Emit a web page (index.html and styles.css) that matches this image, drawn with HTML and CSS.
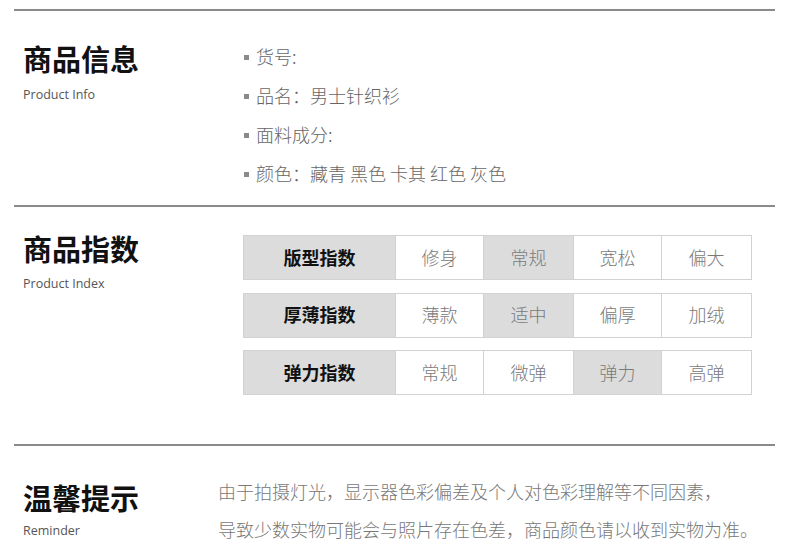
FILE: index.html
```html
<!DOCTYPE html>
<html lang="zh-CN">
<head>
<meta charset="utf-8">
<title>商品信息</title>
<link rel="stylesheet" href="styles.css">
</head>
<body>
<div class="page">
  <section class="sec sec-info">
    <div class="head">
      <h2 class="title">商品信息</h2>
      <p class="sub">Product Info</p>
    </div>
    <ul class="info-list">
      <li>货号:</li>
      <li>品名：男士针织衫</li>
      <li>面料成分:</li>
      <li>颜色：藏青 黑色 卡其 红色 灰色</li>
    </ul>
  </section>

  <section class="sec sec-index">
    <div class="head">
      <h2 class="title">商品指数</h2>
      <p class="sub">Product Index</p>
    </div>
    <div class="index-table">
      <div class="irow">
        <div class="cell label">版型指数</div>
        <div class="cell">修身</div>
        <div class="cell on">常规</div>
        <div class="cell">宽松</div>
        <div class="cell">偏大</div>
      </div>
      <div class="irow">
        <div class="cell label">厚薄指数</div>
        <div class="cell">薄款</div>
        <div class="cell on">适中</div>
        <div class="cell">偏厚</div>
        <div class="cell">加绒</div>
      </div>
      <div class="irow">
        <div class="cell label">弹力指数</div>
        <div class="cell">常规</div>
        <div class="cell">微弹</div>
        <div class="cell on">弹力</div>
        <div class="cell">高弹</div>
      </div>
    </div>
  </section>

  <section class="sec sec-tip">
    <div class="head">
      <h2 class="title">温馨提示</h2>
      <p class="sub">Reminder</p>
    </div>
    <div class="tip-text">
      <p>由于拍摄灯光，显示器色彩偏差及个人对色彩理解等不同因素，</p>
      <p>导致少数实物可能会与照片存在色差，商品颜色请以收到实物为准。</p>
    </div>
  </section>
</div>
</body>
</html>
```
FILE: styles.css
```css
* { box-sizing: border-box; }
html, body { margin: 0; padding: 0; background: #fff; }
body {
  font-family: "Noto Sans CJK SC", "Noto Sans", sans-serif;
  color: #666;
}
.page {
  width: 790px;
  padding: 9px 15px 0 14px;
}
.sec {
  border-top: 2px solid #8a8a8a;
  display: grid;
}
.head { padding-left: 9px; }
.title {
  margin: 0;
  font-size: 29px;
  line-height: 30px;
  font-weight: 700;
  color: #111;
}
.sub {
  margin: 14px 0 0;
  font-family: "Open Sans", "Noto Sans", sans-serif;
  font-size: 12.5px;
  line-height: 16px;
  color: #555;
}

/* section 1 */
.sec-info {
  grid-template-columns: 229px 1fr;
  padding: 26px 0 12px;
}
.sec-info .head { padding-top: 6px; }
.info-list {
  list-style: none;
  margin: 0;
  padding: 0;
}
.info-list li {
  font-size: 18px;
  line-height: 39px;
  color: #666;
  display: flex;
  align-items: center;
  font-weight: 300;
}
.info-list li::before {
  content: "";
  width: 5px;
  height: 5px;
  background: #8a8a8a;
  margin: 1px 7px 0 1px;
}

/* section 2 */
.sec-index {
  grid-template-columns: 229px 1fr;
  padding: 26px 0 49px;
}
.sec-index .head { padding-top: 0; }
.sec-index .sub { margin-top: 13px; }
.index-table {
  width: 509px;
  margin-top: 2px;
  display: flex;
  flex-direction: column;
  gap: 12.5px;
}
.irow {
  display: grid;
  grid-template-columns: 151px 88px 90px 88px 1fr;
  height: 45px;
  border: 1px solid #d2d2d2;
}
.cell {
  display: flex;
  align-items: center;
  justify-content: center;
  padding-bottom: 2px;
  font-size: 18px;
  color: #7a7a7a;
  font-weight: 300;
  border-left: 1px solid #d2d2d2;
}
.cell.label {
  border-left: none;
  background: #dcdcdc;
  color: #111;
  font-weight: 700;
}
.cell.on { background: #dcdcdc; }

/* section 3 */
.sec-tip {
  grid-template-columns: 204px 1fr;
  padding: 26px 0 0;
}
.sec-tip .head { padding-top: 10px; }
.sec-tip .sub { margin-top: 11px; }
.tip-text p {
  margin: 0;
  font-size: 18px;
  line-height: 38px;
  color: #777;
  font-weight: 300;
}
```
